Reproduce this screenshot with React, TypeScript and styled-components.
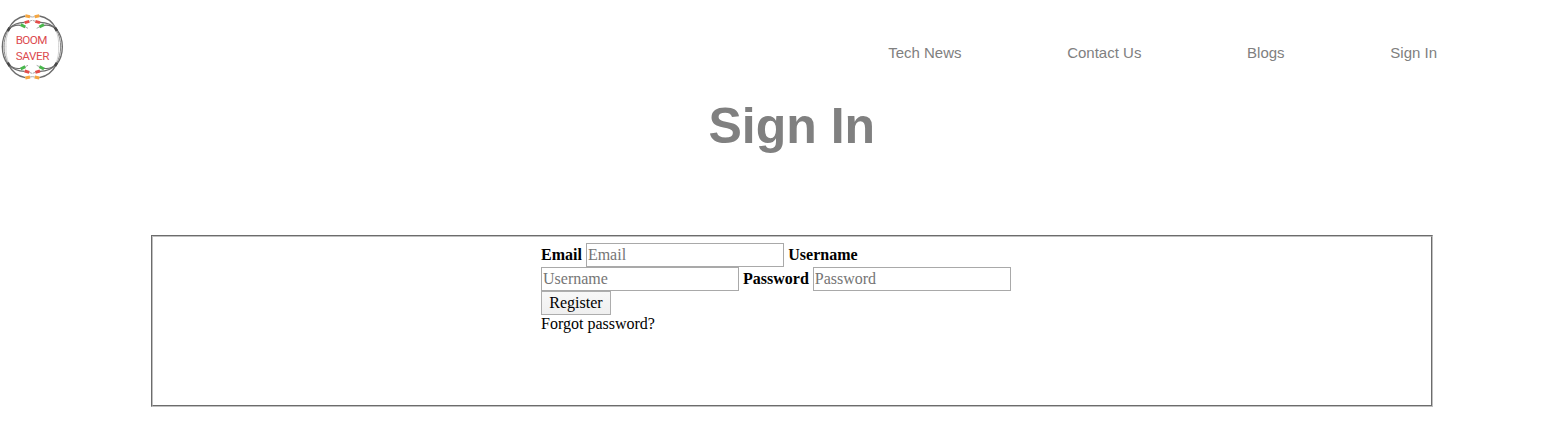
import React from 'react';
import styled, { createGlobalStyle } from 'styled-components';

const GlobalStyle = createGlobalStyle`
  * { box-sizing: border-box; }
  body { margin: 0; background: #fff; overflow: hidden; }
`;

const Page = styled.div`
  font: 16px/18px "Liberation Serif", "Times New Roman", serif;
  color: #000;
  height: 421px;
`;

const Header = styled.header`
  display: flex;
  justify-content: space-between;
  height: 95px;
  padding: 10px 129px 0 0;
`;

const Nav = styled.nav`
  display: flex;
  gap: 105.7px;
  padding-top: 34px;
`;

const NavLink = styled.a`
  font: 15px/18px "Liberation Sans", Arial, sans-serif;
  color: #808080;
`;

const Title = styled.h1`
  width: 1583.5px;
  margin: 0;
  padding-top: 3px;
  height: 140px;
  font: bold 50px/57px "Liberation Sans", Arial, sans-serif;
  color: #808080;
  text-align: center;
`;

const Panel = styled.section`
  width: 1282px;
  height: 172px;
  margin-left: 151px;
  padding: 6px 0 0 388px;
  border: 2px groove #c0c0c0;
`;

const FormRow = styled.div`
  display: flex;
  align-items: center;
  height: 24px;
`;

const Label = styled.label<{ $offset?: number }>`
  font-weight: bold;
  margin-right: 4px;
  margin-left: ${({ $offset = 0 }) => $offset}px;
`;

const Field = styled.input`
  width: 198px;
  height: 24px;
  padding: 1px;
  border: 1px solid #a9a9a9;
  font: inherit;
  background: #fff;
  &::placeholder { color: #757575; }
`;

const Register = styled.button`
  width: 70px;
  height: 24px;
  padding: 0;
  border: 1px solid #adadad;
  background: linear-gradient(#f8f8f8, #efefef);
  font: inherit;
  color: #000;
`;

const Forgot = styled.div`
  line-height: 18px;
`;

const Cables = () => (
  <>
    <g fill="none" stroke="#6c6c6c">
      <path d="M25 57C35 38 52 22 76 18" strokeWidth="4" />
      <path d="M27 57C38 44 54 37 74 37" strokeWidth="4" />
      <path d="M27 57C37 47 48 44 62 46" strokeWidth="3.5" />
      <path d="M24 58C12 73 7 92 7 111" strokeWidth="4" />
      <path d="M25 59C16 76 12 92 12 111" strokeWidth="3" stroke="#888" />
      <path d="M27 60C20 76 17 92 18 111" strokeWidth="2" stroke="#bbb" />
      <path d="M29 53L23 63" stroke="#484848" strokeWidth="8" />
    </g>
    <g strokeWidth="9">
      <path d="M76 17L90 20" stroke="#f5a640" />
      <path d="M74 38L88 34" stroke="#e34d49" />
      <path d="M62 44L76 51" stroke="#48b74c" />
    </g>
    <g stroke="#aaa" strokeWidth="3">
      <path d="M90 20L97 21M88 34L96 31M76 51L84 55" />
    </g>
  </>
);

const Logo = () => (
  <svg width="70" height="75" viewBox="0 0 210 225" aria-label="Boom Saver">
    <g><Cables /></g>
    <g transform="matrix(-1 0 0 1 194 0)"><Cables /></g>
    <g transform="matrix(1 0 0 -1 0 221)"><Cables /></g>
    <g transform="matrix(-1 0 0 -1 194 221)"><Cables /></g>
    <g fill="#dc4b50" fontFamily="Roboto, sans-serif" fontSize="35">
      <text x="47" y="101" textLength="95" lengthAdjust="spacing">BOOM</text>
      <text x="47" y="151" textLength="101" lengthAdjust="spacing">SAVER</text>
    </g>
  </svg>
);

export default function App() {
  return (
    <Page>
      <GlobalStyle />
      <Header>
        <Logo />
        <Nav>
          {['Tech News', 'Contact Us', 'Blogs', 'Sign In'].map((item) => (
            <NavLink key={item}>{item}</NavLink>
          ))}
        </Nav>
      </Header>
      <Title>Sign In</Title>
      <Panel>
        <FormRow>
          <Label>Email</Label>
          <Field placeholder="Email" />
          <Label $offset={4.4}>Username</Label>
        </FormRow>
        <FormRow>
          <Field placeholder="Username" />
          <Label $offset={4}>Password</Label>
          <Field type="password" placeholder="Password" />
        </FormRow>
        <FormRow>
          <Register>Register</Register>
        </FormRow>
        <Forgot>Forgot password?</Forgot>
      </Panel>
    </Page>
  );
}
